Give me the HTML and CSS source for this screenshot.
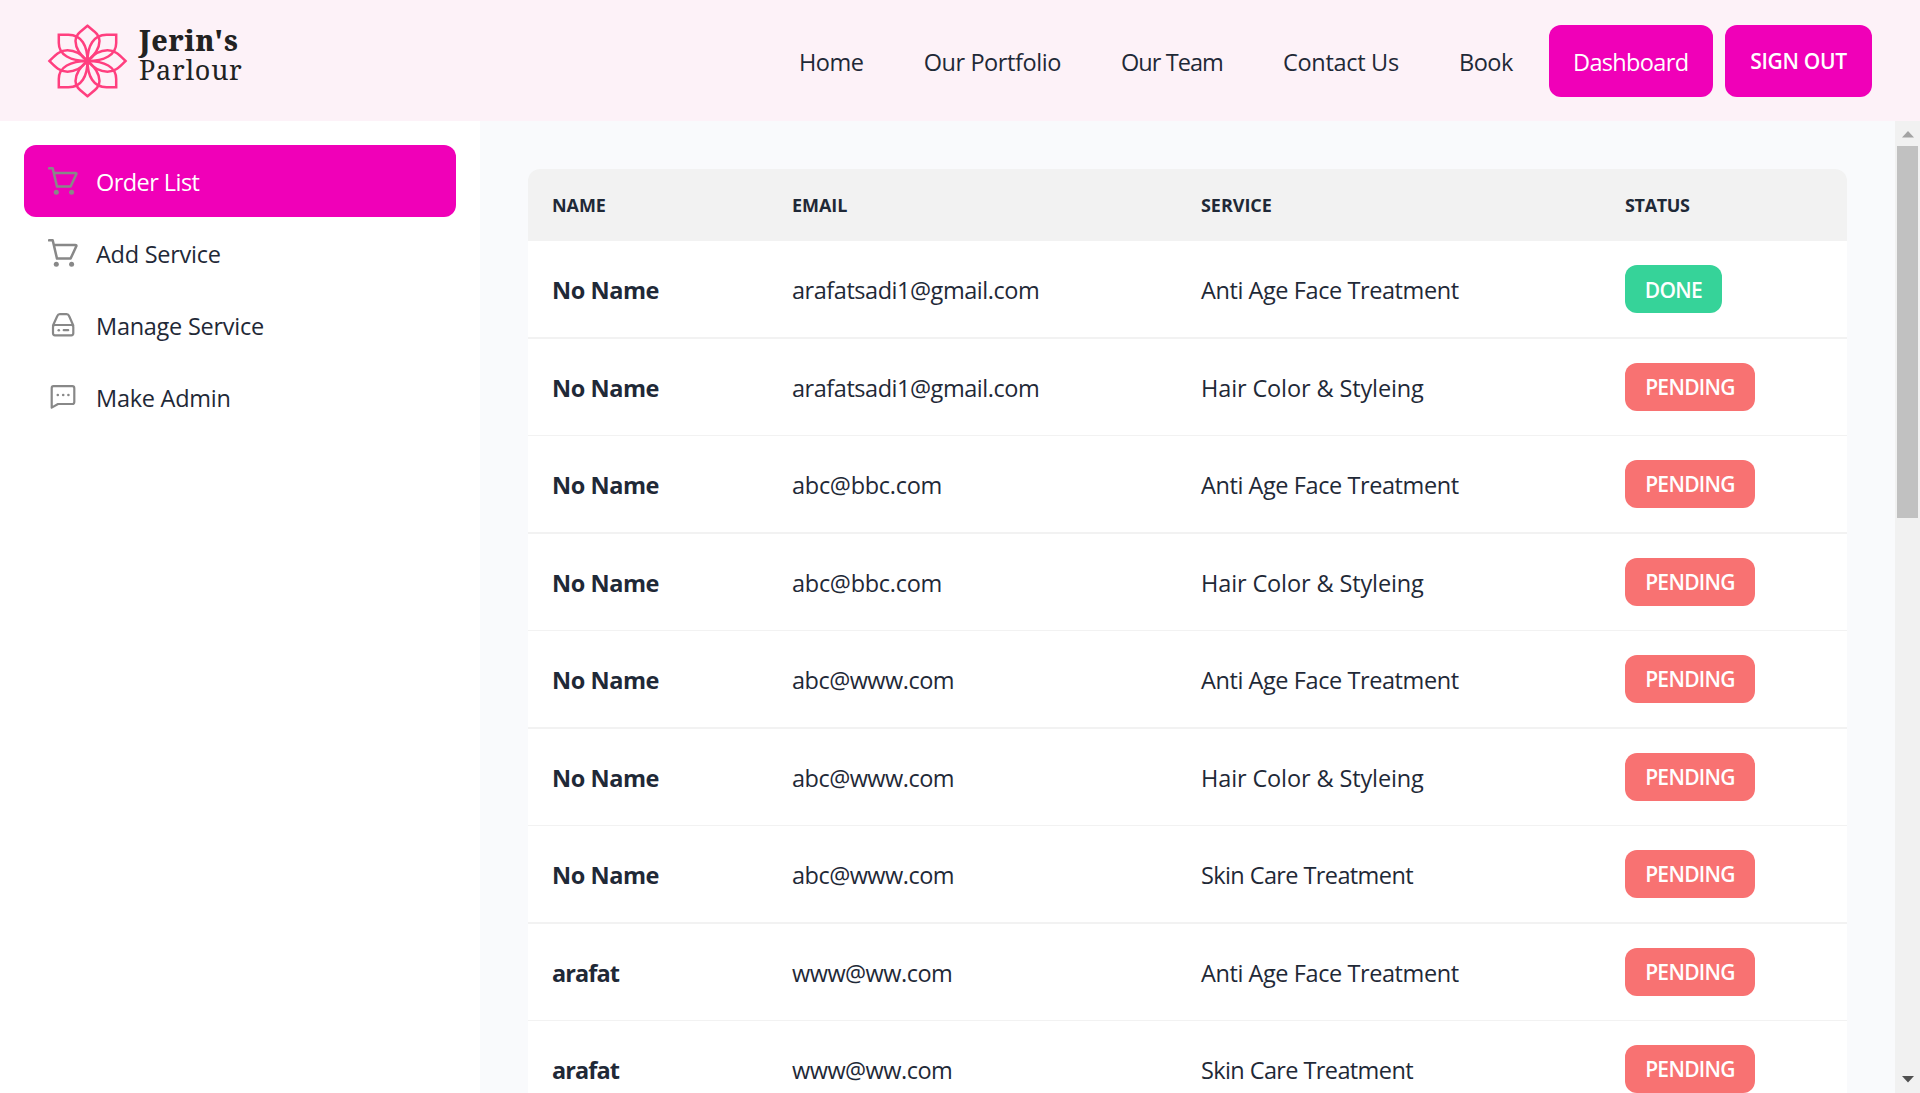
FILE: index.html
```html
<!DOCTYPE html>
<html lang="en">
<head>
<meta charset="utf-8">
<title>Jerin's Parlour</title>
<link rel="stylesheet" href="styles.css">
</head>
<body>
<header class="navbar">
  <a class="brand">
    <svg class="brand-mark" width="82" height="76" viewBox="-41.5 -38 82 76">
      <defs>
        <path id="corner" d="M0 0C0-15-6-26.3-19-26.3H-28.7V-18C-28.7-6-17 0 0 0"/>
        <path id="side" d="M0 0C-6-7-14-10.7-20-10.7C-28-10.7-32-6-38 0C-32 6-28 10.7-20 10.7C-14 10.7-6 7 0 0"/>
        <path id="top" d="M0 0C-7-5-12-13-12-20C-12-27-6-30 0-35.2C6-30 12-27 12-20C12-13 7-5 0 0"/>
      </defs>
      <use href="#corner"/><use href="#corner" transform="scale(-1 1)"/>
      <use href="#corner" transform="scale(1 -1)"/><use href="#corner" transform="scale(-1 -1)"/>
      <use href="#side"/><use href="#side" transform="scale(-1 1)"/>
      <use href="#top"/><use href="#top" transform="scale(1 -1)"/>
    </svg>
    <span class="brand-name"><b>Jerin's</b><span>Parlour</span></span>
  </a>
  <nav class="menu">
    <a class="link">Home</a>
    <a class="link">Our Portfolio</a>
    <a class="link link-team">Our Team</a>
    <a class="link link-contact">Contact Us</a>
    <a class="link">Book</a>
    <a class="link link-active">Dashboard</a>
    <button class="sign-out">SIGN OUT</button>
  </nav>
</header>
<div class="layout">
  <aside class="sidebar">
    <a class="side-item side-active">
      <span class="side-icon"><svg width="30" height="28" viewBox="0 0 30 28"><path d="M1 1.3H4.7L9 19.6H22.6L28.4 7Q28.6 6 27.3 6H6"/><circle class="dot" cx="8.3" cy="25.2" r="2.5"/><circle class="dot" cx="23.6" cy="25.2" r="2.5"/></svg></span>
      <span class="side-label side-order">Order List</span>
    </a>
    <a class="side-item">
      <span class="side-icon"><svg width="30" height="28" viewBox="0 0 30 28"><path d="M1 1.3H4.7L9 19.6H22.6L28.4 7Q28.6 6 27.3 6H6"/><circle class="dot" cx="8.3" cy="25.2" r="2.5"/><circle class="dot" cx="23.6" cy="25.2" r="2.5"/></svg></span>
      <span class="side-label">Add Service</span>
    </a>
    <a class="side-item">
      <span class="side-icon"><svg width="30" height="24" viewBox="-3 0 30 24"><path class="thin" d="M2 12.5 6.3 3Q7 1.2 8.8 1.2H15.6Q17.4 1.2 18.1 3L22.3 12.5M4 12H20.3Q22.3 12 22.3 14V20.3Q22.3 22.3 20.3 22.3H4Q2 22.3 2 20.3V14Q2 12 4 12ZM12.7 17.2H17.2"/><circle class="dot" cx="7.8" cy="17.2" r="1.3"/></svg></span>
      <span class="side-label">Manage Service</span>
    </a>
    <a class="side-item">
      <span class="side-icon"><svg width="30" height="24" viewBox="-2 0 30 24"><path class="thin" d="M3.5 1.2H22.3Q24.3 1.2 24.3 3.2V17Q24.3 19 22.3 19H8L1.7 22.6V3.2Q1.7 1.2 3.5 1.2Z"/><circle class="dot" cx="7.8" cy="10" r="1.3"/><circle class="dot" cx="13.2" cy="10" r="1.3"/><circle class="dot" cx="18.4" cy="10" r="1.3"/></svg></span>
      <span class="side-label">Make Admin</span>
    </a>
  </aside>
  <main class="content">
    <table class="orders">
      <colgroup><col class="col-name"><col class="col-email"><col class="col-service"><col></colgroup>
      <thead><tr><th>NAME</th><th>EMAIL</th><th>SERVICE</th><th class="th-status">STATUS</th></tr></thead>
      <tbody>
        <tr><td class="name">No Name</td><td class="mail">arafatsadi1@gmail.com</td><td>Anti Age Face Treatment</td><td class="status"><span class="badge done">DONE</span></td></tr>
        <tr><td class="name">No Name</td><td class="mail">arafatsadi1@gmail.com</td><td class="hair">Hair Color &amp; Styleing</td><td class="status"><span class="badge">PENDING</span></td></tr>
        <tr><td class="name">No Name</td><td class="mail-bbc">abc@bbc.com</td><td>Anti Age Face Treatment</td><td class="status"><span class="badge">PENDING</span></td></tr>
        <tr><td class="name">No Name</td><td class="mail-bbc">abc@bbc.com</td><td class="hair">Hair Color &amp; Styleing</td><td class="status"><span class="badge">PENDING</span></td></tr>
        <tr><td class="name">No Name</td><td class="mail-www">abc@www.com</td><td>Anti Age Face Treatment</td><td class="status"><span class="badge">PENDING</span></td></tr>
        <tr><td class="name">No Name</td><td class="mail-www">abc@www.com</td><td class="hair">Hair Color &amp; Styleing</td><td class="status"><span class="badge">PENDING</span></td></tr>
        <tr><td class="name">No Name</td><td class="mail-www">abc@www.com</td><td class="skin">Skin Care Treatment</td><td class="status"><span class="badge">PENDING</span></td></tr>
        <tr><td class="name name-short">arafat</td><td class="mail-www">www@ww.com</td><td>Anti Age Face Treatment</td><td class="status"><span class="badge">PENDING</span></td></tr>
        <tr><td class="name name-short">arafat</td><td class="mail-www">www@ww.com</td><td class="skin">Skin Care Treatment</td><td class="status"><span class="badge">PENDING</span></td></tr>
      </tbody>
    </table>
  </main>
  <div class="scrollbar">
    <svg width="12" height="7" viewBox="0 0 12 7"><path fill="#a3a3a3" d="M0 6.5 6 0 12 6.5Z"/></svg>
    <div class="thumb"></div>
    <svg class="arrow-down" width="12" height="7" viewBox="0 0 12 7"><path fill="#505050" d="M0 0 6 6.5 12 0Z"/></svg>
  </div>
</div>
</body>
</html>
```
FILE: styles.css
```css
* { box-sizing: border-box; }
body {
  margin: 0;
  height: 1093px;
  overflow: hidden;
  display: flex;
  flex-direction: column;
  background: #fff;
  color: #1f2937;
  font: 23.5px/36px "Open Sans", "Noto Sans", sans-serif;
  letter-spacing: -0.42px;
}
.navbar {
  flex: none;
  height: 121px;
  padding: 0 48px 0 46px;
  display: flex;
  align-items: center;
  justify-content: space-between;
  background: #fdf2f8;
}
.brand { display: flex; align-items: center; gap: 11px; }
.brand-mark { fill: none; stroke: #ff3f7f; stroke-width: 2.5; }
.brand-name {
  display: flex;
  flex-direction: column;
  padding-bottom: 11px;
  color: #222;
  font: 27px/30px "Noto Serif", "DejaVu Serif", serif;
  letter-spacing: 0.8px;
}
.brand-name b { font-weight: 800; font-size: 28px; letter-spacing: 0.8px; }
.menu { display: flex; gap: 12px; padding-top: 1px; }
.link {
  height: 72px;
  padding: 1px 24px 0;
  line-height: 72px;
  border-radius: 12px;
}
.link-team { letter-spacing: -0.92px; }
.link-contact { letter-spacing: -0.29px; }
.link-active { width: 164px; background: #f000b8; color: #fff; letter-spacing: -0.65px; }
.sign-out {
  width: 147px;
  height: 72px;
  padding: 0;
  border: 0;
  border-radius: 12px;
  background: #f000b8;
  color: #fff;
  font: 600 21px/72px "Open Sans", sans-serif;
  letter-spacing: -0.3px;
}
.sidebar { width: 480px; padding: 24px; letter-spacing: -0.26px; }
.layout { flex: 1; min-height: 0; display: flex; }
.side-item {
  display: flex;
  align-items: center;
  height: 72px;
  padding: 0 24px;
  border-radius: 12px;
}
.side-active { background: #f000b8; color: #fff; }
.side-label { padding-top: 2px; }
.side-order { letter-spacing: -0.55px; }
.side-icon { width: 48px; display: flex; }
.side-icon svg { fill: none; stroke: #888; stroke-width: 2.5; stroke-linecap: round; stroke-linejoin: round; }
.side-icon .thin { stroke-width: 2.2; }
.side-icon .dot { fill: #888; stroke: none; }
.content { flex: 1; padding: 48px; background: #f9fafc; overflow: hidden; }
.orders { width: 1319px; table-layout: fixed; border-spacing: 0; }
.col-name { width: 240px; }
.col-email { width: 409px; }
.col-service { width: 424px; }
th {
  height: 72px;
  padding: 0 24px;
  background: #f2f2f2;
  text-align: left;
  font-size: 18px;
  letter-spacing: -0.05px;
}
th:first-child { border-top-left-radius: 12px; }
th:last-child { border-top-right-radius: 12px; }
.th-status { letter-spacing: -0.35px; }
td {
  height: 97px;
  padding: 2px 24px 0;
  background: #fff;
  border-bottom: 1px solid #f2f2f2;
  white-space: nowrap;
}
tr:nth-child(odd) td { height: 98px; border-bottom-width: 2px; }
.name { font-weight: 700; letter-spacing: -0.43px; }
.name-short { letter-spacing: -0.9px; }
.mail { letter-spacing: -0.46px; }
.mail-bbc { letter-spacing: -0.28px; }
.mail-www { letter-spacing: -0.52px; }
.hair { letter-spacing: -0.12px; }
.skin { letter-spacing: -0.6px; }
.status { padding-top: 0; }
.badge {
  display: block;
  width: 130px;
  height: 48px;
  border-radius: 12px;
  background: #f87272;
  color: #fff;
  text-align: center;
  font-size: 21px;
  font-weight: 600;
  line-height: 49px;
  letter-spacing: -0.7px;
}
.done { width: 97px; background: #36d399; line-height: 50px; }
.scrollbar {
  width: 25px;
  padding: 10px 0;
  display: flex;
  flex-direction: column;
  align-items: center;
  background: #f1f1f1;
}
.thumb { width: 21px; height: 372px; margin-top: 8px; background: #c1c1c1; }
.arrow-down { margin-top: auto; }
```
